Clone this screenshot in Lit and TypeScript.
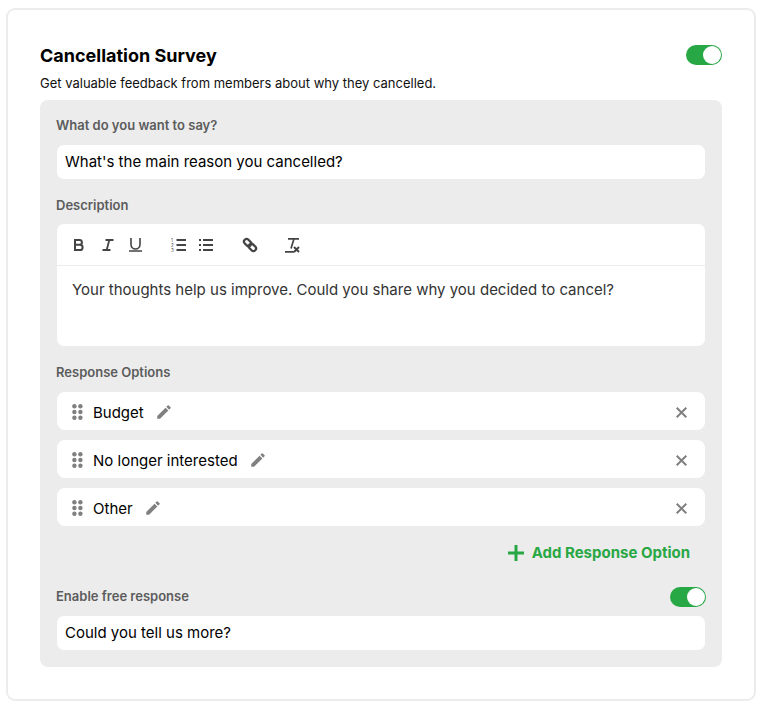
import { LitElement, html, css, svg } from "lit";
import { customElement } from "lit/decorators.js";

const pencil = html`<svg class="pen" viewBox="0 0 24 24" width="18" height="18"><path fill="#808080" d="M3 17.25V21h3.75L17.81 9.94l-3.75-3.75L3 17.25zM20.71 7.04a1 1 0 0 0 0-1.41l-2.34-2.34a1 1 0 0 0-1.41 0l-1.83 1.83 3.75 3.75 1.83-1.83z"/></svg>`;
const grip = html`<svg class="grip" viewBox="0 0 11 16" width="11" height="16"><g fill="#808080">${[2.2, 8, 13.8].map(y => svg`<circle cx="2.4" cy=${y} r="2.2"/><circle cx="8.4" cy=${y} r="2.2"/>`)}</g></svg>`;
const close = html`<svg viewBox="0 0 11 11" width="11" height="11"><path d="M.7.7l9.6 9.6M10.3.7L.7 10.3" stroke="#808080" stroke-width="2" fill="none"/></svg>`;

@customElement("app-root")
export class AppRoot extends LitElement {
  static styles = css`
    :host { display: block; font-family: Inter, "Liberation Sans", sans-serif; box-sizing: border-box; padding: 8px 9px 7px 6px; height: 708px; }
    * { box-sizing: border-box; }
    .card { border: 2px solid #ececec; border-radius: 9px; padding: 32px; height: 693px; background: #fff; }
    .head { display: flex; align-items: flex-start; justify-content: space-between; height: 28px; }
    .head .sw { margin-top: 3px; }
    h1 { margin: 0; font-size: 18px; font-weight: 700; line-height: 28px; color: #000; }
    .desc { margin: 3px 0 7px; font-size: 13px; line-height: 20px; color: #111; height: 20px; }
    .panel { background: #ececec; border-radius: 8px; padding: 16px; height: 567px; }
    label, .lbl { display: block; font-size: 13px; font-weight: 600; color: #5c5c5c; line-height: 18px; height: 20px; }
    .input { display: block; width: 100%; height: 36px; border: 1px solid #ececec; border-radius: 8px; background: #fff; padding: 0 8px 2px; font: 400 15px/20px Inter, sans-serif; color: #000; outline: none; }
    .l1 { margin-bottom: 8px; }
    .l2 { margin-top: 16px; margin-bottom: 7px; }
    .editor { background: #fff; border-radius: 8px; height: 124px; border: 1px solid #ececec; }
    .toolbar { height: 42px; border-bottom: 1px solid #ececec; display: flex; align-items: center; padding-left: 14px; }
    .tb { display: flex; align-items: center; justify-content: center; width: 16px; height: 18px; flex: none; }
    .i { margin-left: 13px; }
    .u { margin-left: 11px; }
    .ol { margin-left: 27px; }
    .ul { margin-left: 12px; }
    .link { margin-left: 28px; }
    .tx { margin-left: 26px; }
    .body { padding: 14px 15px; font-size: 15px; line-height: 20px; color: #333; }
    .l3 { margin-top: 16px; margin-bottom: 9px; }
    .opts { display: flex; flex-direction: column; gap: 10px; }
    .opt { height: 38px; margin: 0 1px; background: #fff; border-radius: 8px; display: flex; align-items: center; padding: 2px 18px 0 15px; font-size: 15px; color: #000; }
    .grip { margin-right: 10px; }
    .pen { margin-left: 11px; }
    .x { margin-left: auto; display: flex; }
    .add { display: flex; justify-content: flex-end; align-items: center; gap: 8px; height: 53px; padding-right: 16px; color: #28a745; font-size: 15px; font-weight: 700; }
    .free { display: flex; justify-content: space-between; align-items: center; height: 20px; margin-top: 8px; margin-bottom: 8px; }
    .sw { width: 36px; height: 20px; border-radius: 10px; background: #28a745; position: relative; flex: none; }
    .sw::after { content: ""; position: absolute; right: 1px; top: 1px; width: 18px; height: 18px; border-radius: 50%; background: #fff; }
    .num { font: 400 4.5px Inter, sans-serif; fill: #444; }
  `;
  render() {
    return html`<div class="card">
      <div class="head"><h1>Cancellation Survey</h1><div class="sw"></div></div>
      <p class="desc">Get valuable feedback from members about why they cancelled.</p>
      <div class="panel">
        <label class="l1">What do you want to say?</label>
        <input class="input" .value=${"What's the main reason you cancelled?"} />
        <label class="l2">Description</label>
        <div class="editor">
          <div class="toolbar">
            <span class="tb"><svg width="12" height="12" viewBox="0 0 12 12"><path fill="none" stroke="#444" stroke-width="2" d="M2 1h4.5a2.4 2.4 0 0 1 0 4.8H2zM2 5.8h5a2.6 2.6 0 0 1 0 5.2H2z"/></svg></span>
            <span class="tb i"><svg width="12" height="12" viewBox="0 0 12 12"><path fill="none" stroke="#444" stroke-width="1.8" d="M3.5 1H11.5M.5 11H8.5M7.3 1L4.7 11"/></svg></span>
            <span class="tb u"><svg width="13" height="14" viewBox="0 0 13 14"><path fill="none" stroke="#444" stroke-width="1.6" d="M2 0v6.5a4.5 4.5 0 0 0 9 0V0M0 13h13"/></svg></span>
            <span class="tb ol"><svg width="15" height="14" viewBox="0 0 15 14"><path stroke="#444" stroke-width="1.8" d="M5.5 2h9.5M5.5 7h9.5M5.5 12h9.5"/><text class="num" x="0" y="4">1</text><text class="num" x="0" y="9">2</text><text class="num" x="0" y="14">3</text></svg></span>
            <span class="tb ul"><svg width="14" height="14" viewBox="0 0 14 14"><path stroke="#444" stroke-width="1.8" d="M4 2h10M4 7h10M4 12h10M0 2h2M0 7h2M0 12h2"/></svg></span>
            <span class="tb link"><svg width="16" height="16" viewBox="0 0 16 16"><g fill="none" stroke="#444" stroke-width="2.3"><rect x="-4" y="-2.6" width="8" height="5.2" rx="2.6" transform="translate(5.6 5.6) rotate(45)"/><rect x="-4" y="-2.6" width="8" height="5.2" rx="2.6" transform="translate(10.4 10.4) rotate(45)"/></g></svg></span>
            <span class="tb tx"><svg width="16" height="16" viewBox="0 0 16 16"><path fill="none" stroke="#444" stroke-width="1.7" d="M4 1.8h11M10 1.8L7 11.5M1 14.8h9"/><path fill="none" stroke="#444" stroke-width="2" d="M10 10l5 5M15 10l-5 5"/></svg></span>
          </div>
          <div class="body">Your thoughts help us improve. Could you share why you decided to cancel?</div>
        </div>
        <label class="l3">Response Options</label>
        <div class="opts">
          ${["Budget", "No longer interested", "Other"].map(t => html`<div class="opt">${grip}<span>${t}</span>${pencil}<span class="x">${close}</span></div>`)}
        </div>
        <div class="add"><svg width="16" height="16" viewBox="0 0 16 16"><path stroke="#28a745" stroke-width="3" d="M8 0v16M0 8h16"/></svg><span>Add Response Option</span></div>
        <div class="free"><span class="lbl">Enable free response</span><div class="sw"></div></div>
        <input class="input" .value=${"Could you tell us more?"} />
      </div>
    </div>`;
  }
}
